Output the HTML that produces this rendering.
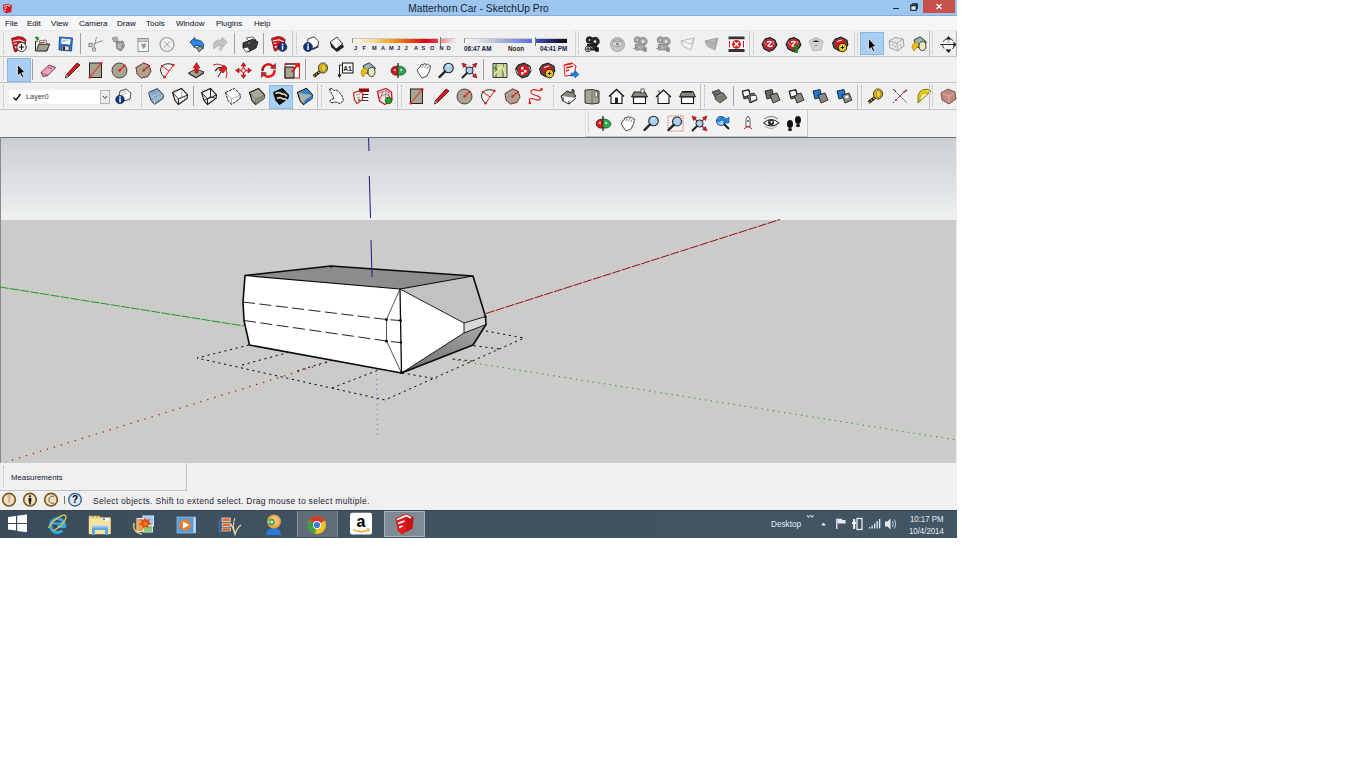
<!DOCTYPE html>
<html><head><meta charset="utf-8">
<style>
html,body{margin:0;padding:0;background:#fff;width:1366px;height:768px;overflow:hidden}
body{font-family:"Liberation Sans",sans-serif;position:relative}
#app{position:absolute;left:0;top:0;width:957px;height:538px;background:#f0f0f0;overflow:hidden}
.a{position:absolute}
#title{left:0;top:0;width:957px;height:15px;background:#9dc6ee;border-bottom:1px solid #86acd4;box-sizing:content-box}
#title .t{left:0;width:957px;top:2px;text-align:center;font-size:10.2px;color:#18222e;line-height:13px}
#close{left:923px;top:0;width:32px;height:13px;background:#c8504a}
#menu{left:0;top:16px;width:957px;height:14px;background:#f5f6f7}
#menu span{position:absolute;top:1.6px;font-size:8px;color:#0a0a14;line-height:11px}
.grip{width:0;border-left:1px dotted #b2b2b2}
.sel{background:#a9cff2;border:1px solid #86b9ea;box-sizing:border-box}
svg.i{position:absolute;overflow:visible}
.stx span{position:absolute;top:0.5px;font-size:5.6px;font-weight:bold;color:#101a48;line-height:7px;white-space:nowrap}
#vp{left:0;top:137px;width:957px;height:326px;background:#cbcbc9;overflow:hidden}
#task{left:0;top:510px;width:957px;height:28px;background:#3d5163}
.tk{position:absolute;color:#e8edf2;font-size:8px;line-height:10px;white-space:nowrap}
</style></head><body>
<div id="app">
  <div id="title" class="a"><div class="a t">Matterhorn Car - SketchUp Pro</div>
    <div id="close" class="a"></div>
    <svg class="i" viewBox="0 0 32 13" style="left:923px;top:0;width:32px;height:13px"><path d="M13.5 4 L18.5 9 M18.5 4 L13.5 9" stroke="#fff" stroke-width="1.25"/></svg>
    <div class="a" style="left:893px;top:7.5px;width:6px;height:1px;background:#1a2a3a"></div>
    <svg class="i" viewBox="0 0 8 8" style="left:910px;top:3px;width:8px;height:8px"><rect x="0.8" y="2" width="5.5" height="5.3" fill="#dde8f2" stroke="#1a2a3a" stroke-width="1.2"/><path d="M2 0.8 H7.3 V6" fill="none" stroke="#1a2a3a" stroke-width="1.2"/><rect x="0.8" y="2" width="5.5" height="1.3" fill="#1a2a3a"/></svg>
    <svg class="i" viewBox="0 0 16 16" style="left:2px;top:2.5px;width:11px;height:11px"><path d="M1.5 3 L8 1 L14.5 3.5 L13.5 13 L6 15 L2 12 Z" fill="#d8141c"/><path d="M3 5 L8 3.2 L12 5" fill="none" stroke="#fff" stroke-width="1.4"/><path d="M3.5 8 L7 6.8" fill="none" stroke="#fff" stroke-width="1.3"/><rect x="3.5" y="10" width="2" height="2" fill="#fff"/></svg>
  </div>
  <div id="menu" class="a">
    <span style="left:5px">File</span><span style="left:27px">Edit</span><span style="left:51px">View</span><span style="left:79px">Camera</span><span style="left:117px">Draw</span><span style="left:146px">Tools</span><span style="left:176px">Window</span><span style="left:216px">Plugins</span><span style="left:254px">Help</span>
  </div>
  <div class="a" style="left:0;top:30px;width:957px;height:1px;background:#e8e8e8"></div>
  <div class="a" style="left:0;top:56px;width:957px;height:1px;background:#c4c4c4"></div>
  <div class="a" style="left:0;top:82px;width:957px;height:1px;background:#c4c4c4"></div>
  <div class="a" style="left:0;top:109px;width:957px;height:1px;background:#c4c4c4"></div>
<div class="a grip" style="left:3px;top:33px;height:21px"></div>
<div class="a sel" style="left:860px;top:32px;width:24px;height:23px"></div>
<svg class="i" viewBox="0 0 16 16" style="left:11px;top:35.5px;width:16px;height:16px"><g transform="translate(0,0) scale(1.0)">
<path d="M0.5 2.5 L7 0.6 L11.5 1.2 L15 3.8 L14 9 L5 15.8 L3.5 15.5 Z" fill="#d8141c" stroke="#3a0808" stroke-width="0.7"/>
<path d="M1.8 5.2 L8.5 4 L13.5 6" fill="none" stroke="#fff" stroke-width="1.1"/>
<path d="M2.5 8 L6 7.3" fill="none" stroke="#fff" stroke-width="0.9"/>
<rect x="4" y="10.5" width="1.8" height="1.8" fill="#fff"/>
</g><circle cx="10.5" cy="11" r="4.6" fill="#fff" stroke="#222" stroke-width="0.9"/><path d="M10.5 8.3v5.4M7.8 11h5.4" stroke="#000" stroke-width="1.2"/></svg>
<svg class="i" viewBox="0 0 16 16" style="left:34px;top:35.5px;width:16px;height:16px"><path d="M1.5 5 L1.5 15 L13 15 L15.5 8 L5 8 L3 13" fill="none" stroke="#222" stroke-width="1"/><path d="M5 5 L12 4 L13 8 L6 8Z" fill="#f4f4f4" stroke="#333" stroke-width="0.6"/><path d="M6 7l5-1" stroke="#d02020" stroke-width="1"/><path d="M2.5 14.5 L5 8.5 L15.5 8.5 L12.5 14.5Z" fill="#a0a08c" stroke="#333" stroke-width="0.6"/><path d="M1 1.5 L4 1 L4.5 4 Z" fill="#1a9a1a" stroke="#0a5a0a" stroke-width="0.6"/><path d="M3.2 3 L3 6" stroke="#0a7a0a" stroke-width="1"/></svg>
<svg class="i" viewBox="0 0 16 16" style="left:58px;top:35.5px;width:16px;height:16px"><path d="M1.5 1 L14.5 2 L13.5 15 L1 14 Z" fill="#2a7ad8" stroke="#0e3c80" stroke-width="0.8"/><path d="M3.5 2.5 L12.5 3.3 L12 8.5 L3.2 7.8Z" fill="#fff"/><path d="M4.5 4.2h6M4.5 5.6h3" stroke="#556" stroke-width="0.5"/><rect x="4" y="10" width="7" height="4.5" fill="#ddd" stroke="#222" stroke-width="0.6"/><rect x="5" y="10.5" width="2" height="3.5" fill="#222"/></svg>
<div class="a" style="left:80px;top:33px;width:1px;height:21px;background:#a0a0a0"></div>
<svg class="i" viewBox="0 0 16 16" style="left:88px;top:35.5px;width:16px;height:16px"><path d="M8.5 1 L6 12 M14.5 4.5 L4 8.5" stroke="#8a8a8a" stroke-width="0.9" fill="none"/><rect x="1" y="7.5" width="3" height="3" fill="none" stroke="#8a8a8a" stroke-width="1.2"/><circle cx="6" cy="13.5" r="1.6" fill="none" stroke="#8a8a8a" stroke-width="1.1"/></svg>
<svg class="i" viewBox="0 0 16 16" style="left:111px;top:35.5px;width:16px;height:16px"><path d="M1 2 L6 1 L7 5 L3 6 Z" fill="#b0b0b0" stroke="#8a8a8a" stroke-width="0.8"/><path d="M5 6 L12 5 L13.5 10 L10 15 L6 13 Z" fill="#9a9a9a" stroke="#7a7a7a" stroke-width="0.8"/><path d="M7 9.5 l3 -1 M7.5 11.5 l2.5-.5" stroke="#e8e8e8" stroke-width="1"/></svg>
<svg class="i" viewBox="0 0 16 16" style="left:136px;top:35.5px;width:16px;height:16px"><rect x="2" y="2.5" width="10.5" height="13" fill="#f4f4f4" stroke="#8a8a8a" stroke-width="0.9"/><rect x="2" y="2.5" width="10.5" height="3" fill="#c8c8c8" stroke="#8a8a8a" stroke-width="0.6"/><path d="M5 8 L10 7.5 L9.5 11 L7 13 Z" fill="#9a9a9a"/></svg>
<svg class="i" viewBox="0 0 16 16" style="left:159px;top:35.5px;width:16px;height:16px"><circle cx="8" cy="8.5" r="7" fill="none" stroke="#9a9a9a" stroke-width="1.2"/><path d="M5 5.5 L11 11.5 M11 5.5 L5 11.5" stroke="#9a9a9a" stroke-width="1"/></svg>
<svg class="i" viewBox="0 0 16 16" style="left:188.5px;top:35.5px;width:16px;height:16px"><path d="M1 6 L6 1.5 L6 4 C10 3.5 14 5 14.5 9 L14 13 C12 10 9 9 6 9.5 L6 12 Z" fill="#2a8ae8" stroke="#0a2a5a" stroke-width="0.8"/><path d="M7 12 L11 10 L14 12 L10 16 L9 14Z" fill="#9aa088" stroke="#222" stroke-width="0.7"/></svg>
<svg class="i" viewBox="0 0 16 16" style="left:212px;top:35.5px;width:16px;height:16px"><path d="M15 6 L10 1.5 L10 4 C6 3.5 2 5 1.5 9 L2 13 C4 10 7 9 10 9.5 L10 12 Z" fill="#c4c4c4" stroke="#a8a8a8" stroke-width="0.8"/><path d="M6 12 L9 10 L11 13 L8 16Z" fill="#c8c8c8"/></svg>
<div class="a" style="left:234px;top:33px;width:1px;height:21px;background:#a0a0a0"></div>
<svg class="i" viewBox="0 0 16 16" style="left:242px;top:35.5px;width:16px;height:16px"><path d="M4 2 L11 1 L14 4 L8 6Z" fill="#fff" stroke="#222" stroke-width="0.7"/><path d="M1 7 L11 3 L16 6 L14 12 L6 16 L1 12Z" fill="#3a3a3a" stroke="#111" stroke-width="0.8"/><path d="M1 12 L6 11 L8 15 L4 16Z" fill="#fff" stroke="#111" stroke-width="0.6"/><circle cx="7" cy="7" r="1" fill="#777"/></svg>
<div class="a" style="left:263px;top:33px;width:1px;height:21px;background:#a0a0a0"></div>
<svg class="i" viewBox="0 0 16 16" style="left:271px;top:35.5px;width:16px;height:16px"><g transform="translate(0,0) scale(0.95)">
<path d="M0.5 2.5 L7 0.6 L11.5 1.2 L15 3.8 L14 9 L5 15.8 L3.5 15.5 Z" fill="#d8141c" stroke="#3a0808" stroke-width="0.7"/>
<path d="M1.8 5.2 L8.5 4 L13.5 6" fill="none" stroke="#fff" stroke-width="1.1"/>
<path d="M2.5 8 L6 7.3" fill="none" stroke="#fff" stroke-width="0.9"/>
<rect x="4" y="10.5" width="1.8" height="1.8" fill="#fff"/>
</g><circle cx="11.5" cy="11" r="4.4" fill="#10357a" stroke="#061c44" stroke-width="0.6"/><rect x="10.8" y="9.7" width="1.5" height="4" fill="#fff"/><circle cx="11.5" cy="8.3" r="0.85" fill="#fff"/></svg>
<div class="a" style="left:292px;top:31px;width:1px;height:25px;background:#c8c8c8"></div>
<div class="a grip" style="left:296px;top:33px;height:21px"></div>
<svg class="i" viewBox="0 0 16 16" style="left:303px;top:35.5px;width:16px;height:16px"><path d="M5 3 L11 0.8 L15.5 5 L15 10 L9 13 L4.5 8Z" fill="#fff" stroke="#111" stroke-width="0.8"/><path d="M9 13 L15 10 L16 11 L10 14Z" fill="#333"/><circle cx="5" cy="11" r="4.5" fill="#10357a" stroke="#061c44" stroke-width="0.6"/><rect x="4.3" y="9.8" width="1.5" height="4" fill="#fff"/><circle cx="5" cy="8.4" r="0.85" fill="#fff"/></svg>
<svg class="i" viewBox="0 0 16 16" style="left:328px;top:35.5px;width:16px;height:16px"><path d="M2 6 L9 1 L14.5 8 L8 13 Z" fill="#fafafa" stroke="#111" stroke-width="0.8"/><path d="M2 6 L8 13 L14.5 8 L16 11 L9 16 L3 11Z" fill="#222"/></svg>
<div class="a" style="left:575px;top:31px;width:1px;height:25px;background:#d0d0d0"></div>
<div class="a grip" style="left:578px;top:33px;height:21px"></div>
<svg class="i" viewBox="0 0 16 16" style="left:585px;top:35.5px;width:16px;height:16px"><circle cx="4.5" cy="4" r="3.3" fill="#2a2a2a" stroke="#111" stroke-width="0.9"/><circle cx="10" cy="5.5" r="4.2" fill="#2a2a2a" stroke="#111" stroke-width="0.9"/><circle cx="10" cy="5.5" r="1.3" fill="#f4f4f4"/><circle cx="4.5" cy="4" r="0.9" fill="#ccc"/><rect x="2.5" y="8.5" width="9" height="5.5" fill="#2a2a2a" stroke="#111" stroke-width="0.9"/><path d="M10 12 L13.5 11 L14 15.5 L10.5 16Z" fill="#111"/><path d="M5 10.5 l3 2" stroke="#ddd" stroke-width="0.6"/><circle cx="3" cy="13" r="2.8" fill="#fff" stroke="#111" stroke-width="0.8"/><path d="M3 11v4M1 13h4" stroke="#000" stroke-width="0.9"/></svg>
<svg class="i" viewBox="0 0 16 16" style="left:609px;top:35.5px;width:16px;height:16px"><circle cx="8.5" cy="8.5" r="7" fill="#c8c8c8" stroke="#9c9c9c" stroke-width="0.9"/><ellipse cx="8.5" cy="8" rx="5" ry="2.6" fill="#d8d8d8" stroke="#8a8a8a" stroke-width="0.7"/><circle cx="8.5" cy="8" r="1.6" fill="#8a8a8a"/><path d="M3 5 Q8.5 2 14 5" fill="none" stroke="#8a8a8a" stroke-width="0.7"/></svg>
<svg class="i" viewBox="0 0 16 16" style="left:633px;top:35.5px;width:16px;height:16px"><circle cx="4.5" cy="4" r="3.3" fill="#a4a4a4" stroke="#8c8c8c" stroke-width="0.9"/><circle cx="10" cy="5.5" r="4.2" fill="#a4a4a4" stroke="#8c8c8c" stroke-width="0.9"/><circle cx="10" cy="5.5" r="1.3" fill="#f4f4f4"/><circle cx="4.5" cy="4" r="0.9" fill="#ccc"/><rect x="2.5" y="8.5" width="9" height="5.5" fill="#a4a4a4" stroke="#8c8c8c" stroke-width="0.9"/><path d="M10 12 L13.5 11 L14 15.5 L10.5 16Z" fill="#8c8c8c"/><path d="M5 10.5 l3 2" stroke="#ddd" stroke-width="0.6"/><path d="M0 12.5 L5 11.5" stroke="#8c8c8c" stroke-width="1"/></svg>
<svg class="i" viewBox="0 0 16 16" style="left:656px;top:35.5px;width:16px;height:16px"><circle cx="4.5" cy="4" r="3.3" fill="#a4a4a4" stroke="#8c8c8c" stroke-width="0.9"/><circle cx="10" cy="5.5" r="4.2" fill="#a4a4a4" stroke="#8c8c8c" stroke-width="0.9"/><circle cx="10" cy="5.5" r="1.3" fill="#f4f4f4"/><circle cx="4.5" cy="4" r="0.9" fill="#ccc"/><rect x="2.5" y="8.5" width="9" height="5.5" fill="#a4a4a4" stroke="#8c8c8c" stroke-width="0.9"/><path d="M10 12 L13.5 11 L14 15.5 L10.5 16Z" fill="#8c8c8c"/><path d="M5 10.5 l3 2" stroke="#ddd" stroke-width="0.6"/><path d="M0 12.5 L5 11.5" stroke="#8c8c8c" stroke-width="1"/></svg>
<svg class="i" viewBox="0 0 16 16" style="left:680px;top:35.5px;width:16px;height:16px"><path d="M1 5 L10 3 L14 2 L11 14 L3 10 Z" fill="#f4f4f4" stroke="#aaa" stroke-width="0.8"/><path d="M1 5 L11 8 L14 2" fill="none" stroke="#aaa" stroke-width="0.7"/></svg>
<svg class="i" viewBox="0 0 16 16" style="left:704px;top:35.5px;width:16px;height:16px"><path d="M1 5 L14 2 L11 14 L3 10 Z" fill="#b4b4b4" stroke="#999" stroke-width="0.8"/><path d="M1 5 L11 8 L14 2" fill="none" stroke="#9a9a9a" stroke-width="0.7"/></svg>
<svg class="i" viewBox="0 0 16 16" style="left:728px;top:35.5px;width:16px;height:16px"><rect x="0.5" y="0.5" width="16" height="3" fill="#333"/><rect x="0.5" y="13" width="16" height="3" fill="#333"/><rect x="0.5" y="3.5" width="16" height="9.5" fill="#fff"/><circle cx="8.5" cy="8.3" r="4.4" fill="#e01818"/><path d="M6.3 6 L10.7 10.6 M10.7 6 L6.3 10.6" stroke="#fff" stroke-width="1.4"/><path d="M1.5 5v6.5M15.5 5v6.5" stroke="#e01818" stroke-width="1"/></svg>
<div class="a" style="left:749px;top:31px;width:1px;height:25px;background:#c8c8c8"></div>
<div class="a grip" style="left:753px;top:33px;height:21px"></div>
<svg class="i" viewBox="0 0 16 16" style="left:761px;top:35.5px;width:16px;height:16px"><path d="M1 8 L4 3 L9 1.5 L14 4 L16 9 L13 13.5 L8 15.5 L3 13 Z" fill="#5a4a4a" stroke="#111" stroke-width="1"/><circle cx="8.5" cy="8.3" r="5.2" fill="#d81820"/><path d="M6 6.5 Q8 4.5 10.5 6 L7 9.5 Q9.5 11.5 11.5 9.5" fill="none" stroke="#fff" stroke-width="1.3"/><path d="M3 5.5 L5 9 M13 5 L12 9" stroke="#ddd" stroke-width="0.6"/></svg>
<svg class="i" viewBox="0 0 16 16" style="left:785px;top:35.5px;width:16px;height:16px"><path d="M1 8 L4 3 L9 1.5 L14 4 L16 9 L13 13.5 L8 15.5 L3 13 Z" fill="#5a4a4a" stroke="#111" stroke-width="1"/><circle cx="8.5" cy="8.3" r="5.2" fill="#d81820"/><path d="M6 6.5 Q8 4.5 10.5 6 L7 9.5 Q9.5 11.5 11.5 9.5" fill="none" stroke="#fff" stroke-width="1.3"/><path d="M3 5.5 L5 9 M13 5 L12 9" stroke="#ddd" stroke-width="0.6"/><path d="M9.5 16.5 L9.5 12 L8 12 L11 8.5 L14 12 L12.5 12 L12.5 16.5Z" fill="#1a8a1a" stroke="#0a4a0a" stroke-width="0.5"/></svg>
<svg class="i" viewBox="0 0 16 16" style="left:808px;top:35.5px;width:16px;height:16px"><path d="M1 5 L8 1.5 L15 5 L13 14 L5 15 Z" fill="#d4d4d4" stroke="#aaa" stroke-width="0.8"/><path d="M4 6 L8 4 L12 6 M6 10l4-1" stroke="#9a9a9a" stroke-width="1"/></svg>
<svg class="i" viewBox="0 0 16 16" style="left:832px;top:35.5px;width:16px;height:16px"><path d="M0.5 7 L3 3 L9 1 L15 4 L16 9 L13 13 L7 15 L2 12 Z" fill="#4a4a44" stroke="#111" stroke-width="0.9"/><path d="M3 5 L10 2.5 L14 6 L12.5 11 L6 13 L3.5 10Z" fill="#d81820"/><path d="M5 5.5 L10 4" stroke="#fff" stroke-width="1"/><circle cx="10.5" cy="11.5" r="4.2" fill="#f0d010" stroke="#111" stroke-width="0.9"/><path d="M8.8 11.5 h3.4 M10.5 9.8v3.4" stroke="#111" stroke-width="1"/></svg>
<div class="a" style="left:854px;top:31px;width:1px;height:25px;background:#d0d0d0"></div>
<div class="a grip" style="left:857px;top:33px;height:21px"></div>
<svg class="i" viewBox="0 0 16 16" style="left:863px;top:35.5px;width:16px;height:16px"><path d="M5.5 2.5 L5.5 14 L8 11.5 L10 15.5 L11.8 14.7 L9.8 10.8 L13 10.5 Z" fill="#000" stroke="#fff" stroke-width="0.7"/></svg>
<svg class="i" viewBox="0 0 16 16" style="left:888px;top:35.5px;width:16px;height:16px"><path d="M1 5 L7 1.5 L15 3 L16 10 L10 15 L2 12 Z" fill="#e8e8e8" stroke="#9a9a9a" stroke-width="0.9"/><path d="M1 5 L9 7 L15 3 M9 7 L10 15 M4 8 l4 3 M12 8l2 4" stroke="#9a9a9a" stroke-width="0.8" fill="none"/></svg>
<svg class="i" viewBox="0 0 16 16" style="left:911px;top:35.5px;width:16px;height:16px"><path d="M3 4 L9 0.8 L15.5 6 L11 12 L6 11Z" fill="#9ab8b8" stroke="#222" stroke-width="0.9"/><path d="M1 11 Q2 6 6 6 L8 9 Q5 12 3 15 Z" fill="#f0c010" stroke="#8a6a00" stroke-width="0.6"/><ellipse cx="11.5" cy="10" rx="3.5" ry="4.5" fill="#e8e8c0" stroke="#222" stroke-width="0.8"/></svg>
<div class="a" style="left:929px;top:31px;width:1px;height:25px;background:#b8b8b8"></div>
<div class="a grip" style="left:932px;top:33px;height:21px"></div>
<svg class="i" viewBox="0 0 16 16" style="left:940px;top:35.5px;width:16px;height:16px"><circle cx="8.5" cy="8.5" r="6" fill="none" stroke="#111" stroke-width="0.8" stroke-dasharray="5 2"/><path d="M0 8.5 H17" stroke="#111" stroke-width="0.9"/><path d="M8.5 0 L11 3.5 L6 3.5Z M8.5 17 L11 13.5 L6 13.5Z M17 8.5 L13.5 6 L13.5 11Z" fill="#111"/><text x="8.5" y="7" font-size="3.5" text-anchor="middle" fill="#333" font-family="Liberation Sans">C</text></svg>
<div class="a" style="left:956px;top:31px;width:1px;height:25px;background:#b8b8b8"></div>
<div class="a" style="left:352px;top:38px;width:86px;height:5px;background:linear-gradient(90deg,#fdf8ec,#f6d890 25%,#f0a020 45%,#e84010 70%,#e00010 85%,#e83a48);border-left:1px solid #888;border-top:1px solid #c8c8c8;box-sizing:border-box"></div>
<div class="a" style="left:440px;top:37px;width:1px;height:9px;background:#777"></div>
<div class="a" style="left:441px;top:38px;width:14px;height:5px;background:linear-gradient(90deg,#f08890,#fce8ea);border-top:1px solid #c8c8c8;box-sizing:border-box"></div>
<div class="a" style="left:464px;top:38px;width:68px;height:5px;background:linear-gradient(90deg,#fafbfc,#b8c4d8 45%,#5870e0);border-left:1px solid #888;border-top:1px solid #c8c8c8;box-sizing:border-box"></div>
<div class="a" style="left:535px;top:37px;width:1px;height:9px;background:#777"></div>
<div class="a" style="left:536px;top:38px;width:31px;height:5px;background:linear-gradient(90deg,#4050c0,#181840 70%,#080810);border-top:1px solid #c8c8c8;box-sizing:border-box"></div>
<div class="a stx" style="left:354px;top:44px;word-spacing:0;letter-spacing:0">
<span style="left:0px">J</span><span style="left:8.5px">F</span><span style="left:18px">M</span><span style="left:27px">A</span><span style="left:35px">M</span><span style="left:43px">J</span><span style="left:50.5px">J</span><span style="left:60px">A</span><span style="left:67.5px">S</span><span style="left:76px">O</span><span style="left:85.5px">N</span><span style="left:92.5px">D</span>
</div>
<div class="a stx" style="left:464px;top:44px"><span style="left:0;font-size:6.3px">06:47 AM</span><span style="left:44px;color:#2a1a08;font-size:6.3px">Noon</span><span style="left:76px;font-size:6.3px">04:41 PM</span></div>

<div class="a grip" style="left:3px;top:59px;height:21px"></div>
<div class="a sel" style="left:7px;top:58px;width:24px;height:24px"></div>
<svg class="i" viewBox="0 0 16 16" style="left:12px;top:61.5px;width:16px;height:16px"><path d="M5.5 2.5 L5.5 14 L8 11.5 L10 15.5 L11.8 14.7 L9.8 10.8 L13 10.5 Z" fill="#000" stroke="#fff" stroke-width="0.7"/></svg>
<div class="a" style="left:32px;top:59px;width:1px;height:21px;background:#a0a0a0"></div>
<svg class="i" viewBox="0 0 16 16" style="left:40px;top:61.5px;width:16px;height:16px"><path d="M1 10.5 L9 3 L15.5 5.5 L8 13.5 Z" fill="#f4a0c0" stroke="#4a2a3a" stroke-width="0.8"/><path d="M1 10.5 L3 14.5 L8 13.5" fill="#e890b0" stroke="#4a2a3a" stroke-width="0.8"/><path d="M8 5.5 L12 6.5" stroke="#7a3a5a" stroke-width="0.8"/></svg>
<svg class="i" viewBox="0 0 16 16" style="left:64px;top:61.5px;width:16px;height:16px"><path d="M13 1 L16 3 L5 14 L1.5 16 L2.5 12.5Z" fill="#d81820" stroke="#3a0a0a" stroke-width="0.8"/><path d="M2.5 12.5 L5 14 L1.5 16Z" fill="#e8d0a0" stroke="#222" stroke-width="0.5"/></svg>
<svg class="i" viewBox="0 0 16 16" style="left:88px;top:61.5px;width:16px;height:16px"><rect x="1.5" y="1" width="12" height="14.5" fill="#a8a490" stroke="#222" stroke-width="1"/><path d="M1.5 15.5 L13.5 1" stroke="#e81818" stroke-width="1"/><circle cx="1.8" cy="15.2" r="1.2" fill="#e81818"/><circle cx="13.2" cy="1.3" r="1.2" fill="#e81818"/></svg>
<svg class="i" viewBox="0 0 16 16" style="left:111px;top:61.5px;width:16px;height:16px"><circle cx="8.5" cy="8.5" r="7.5" fill="#a8a490" stroke="#333" stroke-width="0.9"/><path d="M8.5 8.5 L13.5 3.5" stroke="#e81818" stroke-width="1.1"/><circle cx="8.5" cy="8.5" r="1.2" fill="#e81818"/><circle cx="13.5" cy="3.5" r="1.1" fill="#e81818"/></svg>
<svg class="i" viewBox="0 0 16 16" style="left:135px;top:61.5px;width:16px;height:16px"><path d="M8.5 1 L14 3 L16 9 L13 14.5 L6.5 16 L2 12 L1 5.5Z" fill="#a8a490" stroke="#e81818" stroke-width="1" stroke-dasharray="2 1"/><path d="M8.5 1 L14 3 L16 9 L13 14.5 L6.5 16 L2 12 L1 5.5Z" fill="none" stroke="#222" stroke-width="0.5"/><path d="M8.5 8.5 L14 4" stroke="#e81818" stroke-width="1.1"/><circle cx="8.5" cy="8.5" r="1.2" fill="#e81818"/></svg>
<svg class="i" viewBox="0 0 16 16" style="left:159px;top:61.5px;width:16px;height:16px"><path d="M5.5 15.5 Q-1 9 3 4 Q8 0 14.5 3" fill="none" stroke="#222" stroke-width="1"/><path d="M3 4 L10 9 M5.5 15.5 L14.5 3" stroke="#e81818" stroke-width="1"/><circle cx="3" cy="4" r="1.1" fill="#e81818"/><circle cx="5.5" cy="15.3" r="1.2" fill="#e81818"/><circle cx="14.5" cy="3" r="1.2" fill="#e81818"/></svg>
<svg class="i" viewBox="0 0 16 16" style="left:188px;top:61.5px;width:16px;height:16px"><path d="M0.5 11 L8 7 L16 10 L8 15.5Z" fill="#a8a490" stroke="#222" stroke-width="0.9"/><path d="M0.5 11 L8 15.5 L16 10 L16 11.5 L8 16.5 L0.5 12Z" fill="#333"/><path d="M8.5 0.5 L12 6 L10 6 L10 11 L7 11 L7 6 L5 6Z" fill="#e81818" stroke="#6a0a0a" stroke-width="0.5"/></svg>
<svg class="i" viewBox="0 0 16 16" style="left:212px;top:61.5px;width:16px;height:16px"><path d="M1 3 Q9 0 14 7 Q16 12 14 16" fill="none" stroke="#e81818" stroke-width="1"/><path d="M3 9 Q7 4 11 6" fill="none" stroke="#111" stroke-width="1.2"/><path d="M7 8 L12 3 L15 6 L11 11Z" fill="#e81818" stroke="#5a0a0a" stroke-width="0.6"/><path d="M9 10 Q7 13 6 15" fill="none" stroke="#111" stroke-width="1"/></svg>
<svg class="i" viewBox="0 0 16 16" style="left:235px;top:61.5px;width:16px;height:16px"><path d="M8.5 0.5 L11 4 L6 4Z M8.5 16.5 L11 13 L6 13Z M0.5 8.5 L4 6 L4 11Z M16.5 8.5 L13 6 L13 11Z" fill="#e81818" stroke="#6a0a0a" stroke-width="0.5"/><path d="M8.5 4v9M4 8.5h9" stroke="#e81818" stroke-width="1.5"/><circle cx="8.5" cy="8.5" r="2" fill="#fff" stroke="#e81818" stroke-width="1"/></svg>
<svg class="i" viewBox="0 0 16 16" style="left:260px;top:61.5px;width:16px;height:16px"><path d="M2.5 9 A6 6 0 0 1 13 4.5" fill="none" stroke="#e81818" stroke-width="2.4"/><path d="M14.5 8 A6 6 0 0 1 4 12.5" fill="none" stroke="#e81818" stroke-width="2.4"/><path d="M15.5 1.5 L15.5 7 L10.5 6Z M1.5 15.5 L1.5 10 L6.5 11Z" fill="#e81818" stroke="#222" stroke-width="0.5"/><path d="M2.5 9 A6 6 0 0 1 5 4" fill="none" stroke="#111" stroke-width="0.7"/></svg>
<svg class="i" viewBox="0 0 16 16" style="left:284px;top:61.5px;width:16px;height:16px"><rect x="1" y="2" width="14.5" height="14" fill="#fff" stroke="#e81818" stroke-width="1"/><path d="M1 16 L1 5 L10 5 L10 16Z" fill="#a8a490" stroke="#111" stroke-width="1"/><path d="M1 2h12v3" fill="none" stroke="#111" stroke-width="1"/><path d="M8 10 L14 2" stroke="#e81818" stroke-width="2"/><path d="M15.5 0.5 L15.5 6 L10 2.5Z" fill="#e81818"/></svg>
<div class="a" style="left:305px;top:59px;width:1px;height:21px;background:#a0a0a0"></div>
<svg class="i" viewBox="0 0 16 16" style="left:312px;top:61.5px;width:16px;height:16px"><path d="M1.5 14.5 L8 9.5" stroke="#111" stroke-width="3"/><path d="M1.5 14.5 L8 9.5" stroke="#f0c010" stroke-width="1.5" stroke-dasharray="1.5 1.5"/><ellipse cx="11" cy="6" rx="4.5" ry="5" fill="#f0c010" stroke="#222" stroke-width="0.9"/><ellipse cx="11.5" cy="6" rx="2.5" ry="3.5" fill="#e8d040" stroke="#7a6a10" stroke-width="0.6"/><path d="M8 1.5 Q14 0 15.5 4" fill="none" stroke="#888" stroke-width="1"/></svg>
<svg class="i" viewBox="0 0 16 16" style="left:337px;top:61.5px;width:16px;height:16px"><rect x="5.5" y="1" width="10.5" height="10" fill="#fff" stroke="#222" stroke-width="1.1"/><text x="10.8" y="8.8" font-size="7" font-weight="bold" text-anchor="middle" fill="#222" font-family="Liberation Mono">A1</text><path d="M2.5 3 V15" stroke="#111" stroke-width="0.9"/><path d="M0.5 12.5 L2.5 16 L4.5 12.5Z" fill="#111"/><path d="M2.5 3 H5.5" stroke="#111" stroke-width="0.7"/></svg>
<svg class="i" viewBox="0 0 16 16" style="left:360px;top:61.5px;width:16px;height:16px"><path d="M3 4 L9 0.8 L15.5 6 L11 12 L6 11Z" fill="#9ab8b8" stroke="#222" stroke-width="0.9"/><path d="M1 11 Q2 6 6 6 L8 9 Q5 12 3 15 Z" fill="#f0c010" stroke="#8a6a00" stroke-width="0.6"/><ellipse cx="11.5" cy="10" rx="3.5" ry="4.5" fill="#e8e8c0" stroke="#222" stroke-width="0.8"/></svg>
<svg class="i" viewBox="0 0 16 16" style="left:390px;top:61.5px;width:16px;height:16px"><path d="M8 1 L8 16" stroke="#111" stroke-width="1.2"/><path d="M8 4 Q1 4 1 9 Q2 14 8 13Z" fill="#d01818" stroke="#3a0a0a" stroke-width="0.6"/><path d="M8 4 Q15 4 16 9 Q15 14 8 13Z" fill="#28a850" stroke="#0a3a1a" stroke-width="0.6"/><path d="M3.5 8 l2-1.5v3Z M12.5 8 l-2-1.5v3Z" fill="#fff"/></svg>
<svg class="i" viewBox="0 0 16 16" style="left:415px;top:61.5px;width:16px;height:16px"><path d="M2 8 L5 5 L6 2.5 L8 3 L9 1.5 L11 2.5 L12.5 2 L14 3.5 L15.5 4 L14.5 9 L12 14 L7 16 L4 12 Z" fill="#fff" stroke="#222" stroke-width="0.8"/><path d="M7 6 L8.5 3.5 M9.5 6 L11 3 M11.5 7 L13.5 4" stroke="#333" stroke-width="0.6"/></svg>
<svg class="i" viewBox="0 0 16 16" style="left:438px;top:61.5px;width:16px;height:16px"><circle cx="10.5" cy="6" r="4.8" fill="#a8d0f0" stroke="#222" stroke-width="1.1"/><path d="M7 9.5 L1.5 15" stroke="#222" stroke-width="2.4" stroke-linecap="round"/><path d="M9 4 Q10 3 12 3.5" stroke="#fff" stroke-width="0.9" fill="none"/></svg>
<svg class="i" viewBox="0 0 16 16" style="left:461px;top:61.5px;width:16px;height:16px"><path d="M1 1 L5.5 2.5 L2.5 5.5Z M16 1 L11.5 2.5 L14.5 5.5Z M16 16 L11.5 14.5 L14.5 11.5Z" fill="#d01818" stroke="#5a0a0a" stroke-width="0.5"/><path d="M2 2 L6 6 M15 2 L11 6 M15 15 L11 11" stroke="#d01818" stroke-width="1.2"/><circle cx="8.5" cy="8.5" r="3.6" fill="#a8d0f0" stroke="#222" stroke-width="1"/><path d="M6 11 L1.5 15.5" stroke="#222" stroke-width="2" stroke-linecap="round"/></svg>
<div class="a" style="left:483px;top:59px;width:1px;height:21px;background:#a0a0a0"></div>
<svg class="i" viewBox="0 0 16 16" style="left:492px;top:61.5px;width:16px;height:16px"><path d="M1 1.5 L15 1.5 L15 15.5 L1 15.5Z" fill="#c8d8a8" stroke="#222" stroke-width="0.9"/><path d="M4 1.5 L4 15.5 M11 1.5 L11 15.5" stroke="#556a3a" stroke-width="1.2"/><path d="M2 13 L10 4 L14 14" fill="none" stroke="#f0e890" stroke-width="1.5"/><path d="M2 5 l3 3" stroke="#3a8a2a" stroke-width="1.5"/></svg>
<svg class="i" viewBox="0 0 16 16" style="left:515px;top:61.5px;width:16px;height:16px"><path d="M0.5 7 L3 3 L9 1 L15 4 L16 9 L13 14 L7 16 L2 12 Z" fill="#4a4a44" stroke="#111" stroke-width="0.9"/><path d="M3 5 L10 2.5 L14 6 L12.5 12.5 L6 14.5 L3.5 11Z" fill="#d81820"/><path d="M6 5 h2.5 v2.5 h-2.5Z M9 8 h2.5 v2.5 h-2.5Z M6 10 h2.5 v2.5 h-2.5Z" fill="#fff"/><path d="M1 8 L3 12 M14 4.5 L15.5 9" stroke="#d8d8c8" stroke-width="0.8"/></svg>
<svg class="i" viewBox="0 0 16 16" style="left:539px;top:61.5px;width:16px;height:16px"><path d="M0.5 7 L3 3 L9 1 L15 4 L16 9 L13 13 L7 15 L2 12 Z" fill="#4a4a44" stroke="#111" stroke-width="0.9"/><path d="M3 5 L10 2.5 L14 6 L12.5 11 L6 13 L3.5 10Z" fill="#d81820"/><path d="M5 5.5 L10 4" stroke="#fff" stroke-width="1"/><circle cx="10.5" cy="11.5" r="4.2" fill="#f0d010" stroke="#111" stroke-width="0.9"/><path d="M8.8 11.5 h3.4 M10.5 9.8v3.4" stroke="#111" stroke-width="1"/></svg>
<svg class="i" viewBox="0 0 16 16" style="left:563px;top:61.5px;width:16px;height:16px"><path d="M1 3 L9 1 L13 4 L11 13 L2 14Z" fill="#fff" stroke="#e81818" stroke-width="1"/><path d="M2 3 L9 1.5 M3 6 l7-2 M3 9 l3-1" stroke="#e81818" stroke-width="1.4"/><path d="M8 11 L12 11 L12 8.5 L16 12.5 L12 16 L12 14 L8 14Z" fill="#1a8ae8" stroke="#0a3a7a" stroke-width="0.5"/></svg>
<div class="a grip" style="left:3px;top:85px;height:22px"></div>
<div class="a" style="left:9px;top:90px;width:101px;height:14px;background:#fff"></div>
<div class="a" style="left:100px;top:90px;width:10px;height:14px;background:#ececec;border:1px solid #b4b4b4;box-sizing:border-box"></div>
<svg class="i" viewBox="0 0 10 14" style="left:100px;top:90px;width:10px;height:14px"><path d="M3 6 L5 8.5 L7 6" fill="none" stroke="#444" stroke-width="1"/></svg>
<svg class="i" viewBox="0 0 8 8" style="left:13px;top:93px;width:8px;height:8px"><path d="M0.5 4.5 L3 7 L7.5 1" fill="none" stroke="#000" stroke-width="1.3"/></svg>
<div class="a" style="left:26px;top:91px;font-size:7.4px;line-height:12px;color:#3a3a3a">Layer0</div>
<svg class="i" viewBox="0 0 16 16" style="left:115px;top:88px;width:16px;height:16px"><path d="M5 3 L11 1 L16 5 L15 11 L9 13 L4 9Z" fill="#fff" stroke="#222" stroke-width="0.8"/><path d="M6 5l5-2 M7 7l5-2" stroke="#888" stroke-width="0.6"/><circle cx="5" cy="11.5" r="4.3" fill="#10357a" stroke="#061c44" stroke-width="0.6"/><rect x="4.3" y="10.3" width="1.5" height="4" fill="#fff"/><circle cx="5" cy="8.9" r="0.85" fill="#fff"/></svg>
<div class="a grip" style="left:141px;top:85px;height:22px"></div>
<svg class="i" viewBox="0 0 16 16" style="left:148px;top:88px;width:16px;height:16px"><path d="M0.5 4.5 L9.5 0.5 L15.5 7 L15 10.5 L6.5 16.5 L3 12.5 Z" fill="#88a8c4" stroke="#1a2a3a" stroke-width="0.9"/><path d="M0.5 4.5 L6.5 11 L15.5 7 M6.5 11 L6.5 16.5 M3 9 L12 5 M5 13 L14 9" stroke="#c0d4e8" stroke-width="0.7" fill="none"/></svg>
<svg class="i" viewBox="0 0 16 16" style="left:172px;top:88px;width:16px;height:16px"><path d="M0.5 4.5 L9.5 0.5 L15.5 7 L15 10.5 L6.5 16.5 L3 12.5 Z" fill="#fff" stroke="#111" stroke-width="1.1"/><path d="M0.5 4.5 L6.5 11 L15.5 7 M6.5 11 L6.5 16.5" fill="none" stroke="#111" stroke-width="0.9"/><path d="M3 12.5 L9.5 9 L15 10.5 M9.5 0.5 L9.5 9" fill="none" stroke="#333" stroke-width="0.6" stroke-dasharray="1 1"/></svg>
<div class="a" style="left:193px;top:86px;width:1px;height:20px;background:#a0a0a0"></div>
<div class="a sel" style="left:269px;top:85px;width:24px;height:24px"></div>
<svg class="i" viewBox="0 0 16 16" style="left:201px;top:88px;width:16px;height:16px"><path d="M0.5 4.5 L9.5 0.5 L15.5 7 L15 10.5 L6.5 16.5 L3 12.5 Z" fill="none" stroke="#111" stroke-width="1.1"/><path d="M0.5 4.5 L6.5 11 L15.5 7 M6.5 11 L6.5 16.5 M3 12.5 L9.5 9 L15 10.5 M9.5 0.5 L9.5 9" fill="none" stroke="#111" stroke-width="0.9"/></svg>
<svg class="i" viewBox="0 0 16 16" style="left:225px;top:88px;width:16px;height:16px"><path d="M0.5 4.5 L9.5 0.5 L15.5 7 L15 10.5 L6.5 16.5 L3 12.5 Z" fill="#fff" stroke="#111" stroke-width="1" stroke-dasharray="3 1"/><path d="M0.5 4.5 L6.5 11 L15.5 7 M6.5 11 L6.5 16.5" fill="none" stroke="#555" stroke-width="0.5"/></svg>
<svg class="i" viewBox="0 0 16 16" style="left:249px;top:88px;width:16px;height:16px"><path d="M0.5 4.5 L9.5 0.5 L15.5 7 L15 10.5 L6.5 16.5 L3 12.5 Z" fill="#aaa898" stroke="#111" stroke-width="1.1"/><path d="M6.5 11 L15.5 7 L15 10.5 L6.5 16.5Z" fill="#8e8c7e"/><path d="M0.5 4.5 L6.5 11 L15.5 7 M6.5 11 L6.5 16.5" fill="none" stroke="#555" stroke-width="0.5"/></svg>
<svg class="i" viewBox="0 0 16 16" style="left:273px;top:88px;width:16px;height:16px"><path d="M0.5 4.5 L9.5 0.5 L15.5 7 L15 10.5 L6.5 16.5 L3 12.5 Z" fill="#111" stroke="#000" stroke-width="1"/><path d="M2.5 5.5 Q6 3.5 9 6 Q12 5.5 14 8.5 M4 10.5 Q7.5 8.5 10 11 Q12.5 10.5 14 12.5" stroke="#e0d8b8" stroke-width="1.7" fill="none"/></svg>
<svg class="i" viewBox="0 0 16 16" style="left:297px;top:88px;width:16px;height:16px"><path d="M0.5 4.5 L9.5 0.5 L15.5 7 L15 10.5 L6.5 16.5 L3 12.5 Z" fill="#b0b0a4" stroke="#111" stroke-width="1.1"/><path d="M2 5 L9.5 1.5 L14.5 7 Z" fill="#1a8ae8"/><path d="M15.5 7 L15 10.5 L6.5 16.5 L8 12Z" fill="#2a7ac8"/></svg>
<div class="a" style="left:317px;top:84px;width:1px;height:25px;background:#c0c0c0"></div>
<div class="a grip" style="left:321px;top:85px;height:22px"></div>
<svg class="i" viewBox="0 0 16 16" style="left:329px;top:88px;width:16px;height:16px"><path d="M0.5 1 L3 0.5 L5 2.8 L7 2 L9 3 L10.5 4.5 L13 8 L14.5 12.5 L11 15.5 L7 14 L3 14.8 L0.8 13.5 L2 11.5 L5 10.5 L3.5 7 Z" fill="#fff" stroke="#111" stroke-width="0.9" stroke-dasharray="3 0.6"/></svg>
<svg class="i" viewBox="0 0 16 16" style="left:353px;top:88px;width:16px;height:16px"><rect x="6" y="0.5" width="10" height="3.5" fill="#8a0a10"/><rect x="6" y="4" width="10" height="11.5" fill="#fff"/><path d="M9 6.5h6.5 M9 9.5h6.5 M9 12.5h6.5" stroke="#111" stroke-width="0.9"/><path d="M0.5 5 L6 3 L10 5.5 L9 12 L4 15.5 L1.5 12Z" fill="#f4f0f0" stroke="#c81818" stroke-width="1.2"/><path d="M3 7 L7 6 M4 10 l3 -1" stroke="#666" stroke-width="0.7"/><circle cx="6" cy="12" r="1.2" fill="#5a8a3a"/></svg>
<svg class="i" viewBox="0 0 16 16" style="left:377px;top:88px;width:16px;height:16px"><path d="M0.5 3.5 L9 0.5 L14.5 4 L15 12 L8 16.5 L2.5 13Z" fill="#f0e8e8" stroke="#c81818" stroke-width="1.3"/><path d="M2 5 L9 2.5 L13 5 M4 8 L9 6 L12 8 M9 2.5 L8.5 10" stroke="#555" stroke-width="0.6" fill="none"/><path d="M3 11 L6 3.5 M11 4 L13 11" stroke="#d03030" stroke-width="0.8"/><circle cx="11.5" cy="12.5" r="3.3" fill="#2a9a2a" stroke="#0a4a0a" stroke-width="0.7"/></svg>
<div class="a" style="left:397px;top:84px;width:1px;height:25px;background:#c0c0c0"></div>
<div class="a grip" style="left:401px;top:85px;height:22px"></div>
<svg class="i" viewBox="0 0 16 16" style="left:409px;top:88px;width:16px;height:16px"><rect x="1.5" y="1" width="12" height="14.5" fill="#a8a490" stroke="#222" stroke-width="1"/><path d="M1.5 15.5 L13.5 1" stroke="#e81818" stroke-width="1"/><circle cx="1.8" cy="15.2" r="1.2" fill="#e81818"/><circle cx="13.2" cy="1.3" r="1.2" fill="#e81818"/></svg>
<svg class="i" viewBox="0 0 16 16" style="left:433px;top:88px;width:16px;height:16px"><path d="M13 1 L16 3 L5 14 L1.5 16 L2.5 12.5Z" fill="#d81820" stroke="#3a0a0a" stroke-width="0.8"/><path d="M2.5 12.5 L5 14 L1.5 16Z" fill="#e8d0a0" stroke="#222" stroke-width="0.5"/></svg>
<svg class="i" viewBox="0 0 16 16" style="left:456px;top:88px;width:16px;height:16px"><circle cx="8.5" cy="8.5" r="7.5" fill="#a8a490" stroke="#333" stroke-width="0.9"/><path d="M8.5 8.5 L13.5 3.5" stroke="#e81818" stroke-width="1.1"/><circle cx="8.5" cy="8.5" r="1.2" fill="#e81818"/><circle cx="13.5" cy="3.5" r="1.1" fill="#e81818"/></svg>
<svg class="i" viewBox="0 0 16 16" style="left:480px;top:88px;width:16px;height:16px"><path d="M5.5 15.5 Q-1 9 3 4 Q8 0 14.5 3" fill="none" stroke="#222" stroke-width="1"/><path d="M3 4 L10 9 M5.5 15.5 L14.5 3" stroke="#e81818" stroke-width="1"/><circle cx="3" cy="4" r="1.1" fill="#e81818"/><circle cx="5.5" cy="15.3" r="1.2" fill="#e81818"/><circle cx="14.5" cy="3" r="1.2" fill="#e81818"/></svg>
<svg class="i" viewBox="0 0 16 16" style="left:504px;top:88px;width:16px;height:16px"><path d="M8.5 1 L14 3 L16 9 L13 14.5 L6.5 16 L2 12 L1 5.5Z" fill="#a8a490" stroke="#e81818" stroke-width="1" stroke-dasharray="2 1"/><path d="M8.5 1 L14 3 L16 9 L13 14.5 L6.5 16 L2 12 L1 5.5Z" fill="none" stroke="#222" stroke-width="0.5"/><path d="M8.5 8.5 L14 4" stroke="#e81818" stroke-width="1.1"/><circle cx="8.5" cy="8.5" r="1.2" fill="#e81818"/></svg>
<svg class="i" viewBox="0 0 16 16" style="left:528px;top:88px;width:16px;height:16px"><path d="M1.8 15 Q0.5 10 4.5 10.5 Q10 13 12 11.5 Q13.5 9 8 7.5 Q2 6 3 3 Q5 0.5 10 2.5 Q12.5 3.5 13.5 1" fill="none" stroke="#d81818" stroke-width="1.15"/><circle cx="1.8" cy="15" r="1.3" fill="#d81818"/><circle cx="13.5" cy="1.2" r="1.2" fill="#d81818"/></svg>
<div class="a grip" style="left:553px;top:85px;height:22px"></div>
<svg class="i" viewBox="0 0 16 16" style="left:560px;top:88px;width:16px;height:16px"><path d="M1 8 L7 3 L12 5 L12 1.5 L14 2 L14 6 L16 8 L9 13 Z" fill="#8a8878" stroke="#111" stroke-width="0.9"/><path d="M1 8 L3 13 L9 16 L16 10 M9 13 L9 16 M3 13 L3 9" fill="#fff" stroke="#111" stroke-width="0.9"/></svg>
<svg class="i" viewBox="0 0 16 16" style="left:584px;top:88px;width:16px;height:16px"><path d="M1 2 L8 1.5 L15 3 L15 15 L8 16 L1 15Z" fill="#a8a490" stroke="#222" stroke-width="0.9"/><path d="M8 1.5 V16" stroke="#555" stroke-width="0.7"/><rect x="11" y="4" width="2.5" height="5" fill="#fff" stroke="#222" stroke-width="0.6"/></svg>
<svg class="i" viewBox="0 0 16 16" style="left:608px;top:88px;width:16px;height:16px"><path d="M1 8.5 L8.5 1.5 L16 8.5" fill="none" stroke="#111" stroke-width="1.4"/><path d="M3 7.5 V15.5 H14 V7.5" fill="#fff" stroke="#111" stroke-width="1.1"/><rect x="7" y="9.5" width="3" height="6" fill="#222"/></svg>
<svg class="i" viewBox="0 0 16 16" style="left:631px;top:88px;width:16px;height:16px"><path d="M0.5 9 L3 4 L14 4 L16.5 9Z" fill="#8a8878" stroke="#111" stroke-width="0.9"/><rect x="10" y="1" width="3" height="4" fill="#fff" stroke="#222" stroke-width="0.7"/><rect x="2.5" y="9" width="12" height="6.5" fill="#fff" stroke="#111" stroke-width="1.1"/></svg>
<svg class="i" viewBox="0 0 16 16" style="left:655px;top:88px;width:16px;height:16px"><path d="M1 9 L8.5 2 L16 9" fill="none" stroke="#111" stroke-width="1.2"/><path d="M3 8 V15.5 H14 V8" fill="#fff" stroke="#111" stroke-width="1.1"/><path d="M4 2 V5" stroke="#111" stroke-width="0.8"/></svg>
<svg class="i" viewBox="0 0 16 16" style="left:679px;top:88px;width:16px;height:16px"><path d="M0.5 9 L3 3.5 L14 3.5 L16.5 9Z" fill="#8a8878" stroke="#111" stroke-width="0.9"/><rect x="2.5" y="9" width="12" height="6.5" fill="#fff" stroke="#111" stroke-width="1.1"/><path d="M4 4h9" stroke="#111" stroke-width="1.2"/></svg>
<div class="a" style="left:700px;top:84px;width:1px;height:25px;background:#c0c0c0"></div>
<div class="a grip" style="left:704px;top:85px;height:22px"></div>
<svg class="i" viewBox="0 0 16 16" style="left:711px;top:88px;width:16px;height:16px"><path d="M1 4 L8 1.5 L11 6 L4 9Z" fill="#6a6a60" stroke="#333" stroke-width="0.8"/><path d="M5 7 L12 4.5 L16 10 L9 15 L4 11Z" fill="#7a7a70" stroke="#333" stroke-width="0.8"/><path d="M7 8 l4-1.5" stroke="#aaa" stroke-width="0.6"/></svg>
<div class="a" style="left:733px;top:86px;width:1px;height:20px;background:#a0a0a0"></div>
<svg class="i" viewBox="0 0 16 16" style="left:741px;top:88px;width:16px;height:16px"><path d="M1 3 L8 1.5 L10 9 L3 11Z" fill="#6a6a60" stroke="#111" stroke-width="0.8"/><path d="M6 7 L13 5 L16 12 L9 15Z" fill="#8a8a80" stroke="#111" stroke-width="0.8"/><path d="M1.5 3.5 L7.5 2 L9 7 L3 9Z" fill="#fff" stroke="#111" stroke-width="0.8"/><path d="M9 8 L15 7 L16 11 L10 14Z" fill="#fff" stroke="#111" stroke-width="0.8"/></svg>
<svg class="i" viewBox="0 0 16 16" style="left:764px;top:88px;width:16px;height:16px"><path d="M1 3 L8 1.5 L10 9 L3 11Z" fill="#6a6a60" stroke="#111" stroke-width="0.8"/><path d="M6 7 L13 5 L16 12 L9 15Z" fill="#8a8a80" stroke="#111" stroke-width="0.8"/></svg>
<svg class="i" viewBox="0 0 16 16" style="left:788px;top:88px;width:16px;height:16px"><path d="M1 3 L8 1.5 L10 9 L3 11Z" fill="#6a6a60" stroke="#111" stroke-width="0.8"/><path d="M6 7 L13 5 L16 12 L9 15Z" fill="#8a8a80" stroke="#111" stroke-width="0.8"/><path d="M1.5 3.5 L7.5 2 L9 7 L3 9Z" fill="#fff" stroke="#111" stroke-width="0.8"/></svg>
<svg class="i" viewBox="0 0 16 16" style="left:812px;top:88px;width:16px;height:16px"><path d="M1 3 L8 1.5 L10 9 L3 11Z" fill="#1a7ae0" stroke="#111" stroke-width="0.8"/><path d="M6 7 L13 5 L16 12 L9 15Z" fill="#8a8a80" stroke="#111" stroke-width="0.8"/></svg>
<svg class="i" viewBox="0 0 16 16" style="left:836px;top:88px;width:16px;height:16px"><path d="M1 3 L8 1.5 L10 9 L3 11Z" fill="#1a7ae0" stroke="#111" stroke-width="0.8"/><path d="M6 7 L13 5 L16 12 L9 15Z" fill="#8a8a80" stroke="#111" stroke-width="0.8"/><path d="M9 8 L12 7.5 L12.5 10 L9.5 10.5Z" fill="#fff"/></svg>
<div class="a" style="left:857px;top:84px;width:1px;height:25px;background:#c0c0c0"></div>
<div class="a grip" style="left:861px;top:85px;height:22px"></div>
<svg class="i" viewBox="0 0 16 16" style="left:867px;top:88px;width:16px;height:16px"><path d="M1.5 14.5 L8 9.5" stroke="#111" stroke-width="3"/><path d="M1.5 14.5 L8 9.5" stroke="#f0c010" stroke-width="1.5" stroke-dasharray="1.5 1.5"/><ellipse cx="11" cy="6" rx="4.5" ry="5" fill="#f0c010" stroke="#222" stroke-width="0.9"/><ellipse cx="11.5" cy="6" rx="2.5" ry="3.5" fill="#e8d040" stroke="#7a6a10" stroke-width="0.6"/><path d="M8 1.5 Q14 0 15.5 4" fill="none" stroke="#888" stroke-width="1"/></svg>
<svg class="i" viewBox="0 0 16 16" style="left:892px;top:88px;width:16px;height:16px"><path d="M1 1 L15 15 M1 15 L15 1" stroke="#111" stroke-width="0.8" stroke-dasharray="1.5 1"/><path d="M4 4 L2 1.5 M12 4 L15 2" stroke="#111" stroke-width="1"/><circle cx="4" cy="12" r="1" fill="#e81818"/><circle cx="12" cy="4" r="1" fill="#e81818"/><path d="M6 10 L10 6" stroke="#e81818" stroke-width="0.8"/></svg>
<svg class="i" viewBox="0 0 16 16" style="left:916px;top:88px;width:16px;height:16px"><path d="M2 15 L2 8 A8 8 0 0 1 15 3 Z" fill="#f0d010" stroke="#6a5a00" stroke-width="0.8"/><path d="M4 13 L4 10 A5 5 0 0 1 12 6Z" fill="#f8f0a0" stroke="#6a5a00" stroke-width="0.5"/></svg>
<div class="a" style="left:929px;top:84px;width:1px;height:25px;background:#c0c0c0"></div>
<div class="a grip" style="left:932px;top:85px;height:22px"></div>
<svg class="i" viewBox="0 0 16 16" style="left:940px;top:88px;width:16px;height:16px"><path d="M1 5 L8 1 L15 4 L16 11 L9 16 L2 12 Z" fill="#c08a80" stroke="#6a3a30" stroke-width="0.8"/><path d="M3 6 L9 8 L14 5 M9 8 L9 14" stroke="#e8c0b8" stroke-width="0.8" fill="none"/></svg>
<div class="a" style="left:585px;top:110px;width:223px;height:27px;border-left:1px solid #e0e0e0;border-right:1px solid #c8c8c8;border-bottom:1px solid #c0c0c0;box-sizing:border-box;background:#f2f2f2"></div>
<div class="a grip" style="left:588px;top:112px;height:21px"></div>
<svg class="i" viewBox="0 0 16 16" style="left:595px;top:115px;width:16px;height:16px"><path d="M8 1 L8 16" stroke="#111" stroke-width="1.2"/><path d="M8 4 Q1 4 1 9 Q2 14 8 13Z" fill="#d01818" stroke="#3a0a0a" stroke-width="0.6"/><path d="M8 4 Q15 4 16 9 Q15 14 8 13Z" fill="#28a850" stroke="#0a3a1a" stroke-width="0.6"/><path d="M3.5 8 l2-1.5v3Z M12.5 8 l-2-1.5v3Z" fill="#fff"/></svg>
<svg class="i" viewBox="0 0 16 16" style="left:619px;top:115px;width:16px;height:16px"><path d="M2 8 L5 5 L6 2.5 L8 3 L9 1.5 L11 2.5 L12.5 2 L14 3.5 L15.5 4 L14.5 9 L12 14 L7 16 L4 12 Z" fill="#fff" stroke="#222" stroke-width="0.8"/><path d="M7 6 L8.5 3.5 M9.5 6 L11 3 M11.5 7 L13.5 4" stroke="#333" stroke-width="0.6"/></svg>
<svg class="i" viewBox="0 0 16 16" style="left:643px;top:115px;width:16px;height:16px"><circle cx="10.5" cy="6" r="4.8" fill="#a8d0f0" stroke="#222" stroke-width="1.1"/><path d="M7 9.5 L1.5 15" stroke="#222" stroke-width="2.4" stroke-linecap="round"/><path d="M9 4 Q10 3 12 3.5" stroke="#fff" stroke-width="0.9" fill="none"/></svg>
<svg class="i" viewBox="0 0 16 16" style="left:667px;top:115px;width:16px;height:16px"><rect x="1" y="1" width="15" height="15" fill="none" stroke="#e81818" stroke-width="0.8" stroke-dasharray="1.2 1.2"/><circle cx="10" cy="6.5" r="4.5" fill="#a8d0f0" stroke="#222" stroke-width="1.1"/><path d="M6.8 9.8 L1.5 15" stroke="#222" stroke-width="2.4" stroke-linecap="round"/></svg>
<svg class="i" viewBox="0 0 16 16" style="left:691px;top:115px;width:16px;height:16px"><path d="M1 1 L5.5 2.5 L2.5 5.5Z M16 1 L11.5 2.5 L14.5 5.5Z M16 16 L11.5 14.5 L14.5 11.5Z" fill="#d01818" stroke="#5a0a0a" stroke-width="0.5"/><path d="M2 2 L6 6 M15 2 L11 6 M15 15 L11 11" stroke="#d01818" stroke-width="1.2"/><circle cx="8.5" cy="8.5" r="3.6" fill="#a8d0f0" stroke="#222" stroke-width="1"/><path d="M6 11 L1.5 15.5" stroke="#222" stroke-width="2" stroke-linecap="round"/></svg>
<svg class="i" viewBox="0 0 16 16" style="left:715px;top:115px;width:16px;height:16px"><circle cx="6" cy="6" r="4.5" fill="#a8d0f0" stroke="#1a5ab0" stroke-width="1.1"/><path d="M9 9 L14 14" stroke="#222" stroke-width="2.2"/><path d="M2 6 Q6 0 12 4 L14 2 L14 8 L8 8 L10 6 Q6 4 4 7Z" fill="#1a8ae8" stroke="#0a3a7a" stroke-width="0.5"/></svg>
<svg class="i" viewBox="0 0 16 16" style="left:740px;top:115px;width:16px;height:16px"><path d="M8 1 L10 4 L10 12 L6 12 L6 4Z" fill="#fff" stroke="#333" stroke-width="0.8"/><path d="M4 14 L8 11 L12 14" fill="none" stroke="#d81818" stroke-width="1"/><circle cx="8" cy="6" r="1" fill="#555"/></svg>
<svg class="i" viewBox="0 0 16 16" style="left:763px;top:115px;width:16px;height:16px"><path d="M0.5 8 Q8 1 16 8 Q8 14 0.5 8Z" fill="#fff" stroke="#111" stroke-width="1"/><circle cx="8" cy="7.5" r="3" fill="#333"/><circle cx="8.5" cy="7" r="1" fill="#fff"/><path d="M1 4 Q8 -1 15 4" fill="none" stroke="#555" stroke-width="0.8"/><path d="M2 11 Q8 16 14 11" fill="none" stroke="#888" stroke-width="0.8"/></svg>
<svg class="i" viewBox="0 0 16 16" style="left:786px;top:115px;width:16px;height:16px"><ellipse cx="4" cy="9" rx="3" ry="4" fill="#111"/><rect x="2" y="13" width="4" height="3" rx="1.5" fill="#111"/><ellipse cx="12" cy="5" rx="3" ry="4" fill="#111"/><rect x="10" y="9" width="4" height="3" rx="1.5" fill="#111"/></svg>
  <div id="vp" class="a">
<svg width="957" height="326" viewBox="0 137 957 326" style="position:absolute;left:0;top:0">
<defs>
<linearGradient id="sky" x1="0" y1="0" x2="0" y2="1"><stop offset="0" stop-color="#c9ced2"/><stop offset="1" stop-color="#eef0f1"/></linearGradient>
<linearGradient id="bot" x1="0" y1="1" x2="1" y2="0"><stop offset="0" stop-color="#6e6e6e"/><stop offset="0.5" stop-color="#8a8a8a"/><stop offset="1" stop-color="#a8a8a8"/></linearGradient>
</defs>
<rect x="0" y="137" width="957" height="326" fill="#cbcbc9"/>
<rect x="0" y="137" width="957" height="83" fill="url(#sky)"/>
<rect x="0" y="137" width="957" height="1" fill="#6a6a6a"/>
<rect x="0" y="137" width="1" height="326" fill="#8a8a8a"/>
<rect x="956" y="137" width="1" height="326" fill="#ececec"/>
<!-- axes -->
<g fill="none" stroke-width="1">
<path d="M368.6 138 L369 151 M369.3 176 L370.5 218" stroke="#1a1a8a"/>
<path d="M0 287 L244 326" stroke="#1f9a1f" stroke-width="1" stroke-dasharray="9 1.2"/>
<path d="M486 313.5 L780 219.5" stroke="#9a0c0c" stroke-width="1" stroke-dasharray="9 1.2"/>
<path d="M452 359.5 L957 440" stroke="#1f9a1f" stroke-dasharray="1.2 4.5" stroke-width="1.1"/>
<path d="M334 360.5 L6 462" stroke="#a01818" stroke-dasharray="1.3 6" stroke-width="1.2"/>
<path d="M376.5 369 L377.5 437" stroke="#6a6ad0" stroke-dasharray="1 4" stroke-width="1"/>
</g>
<!-- hidden dashed outline -->
<g fill="none" stroke="#000" stroke-width="0.95" stroke-dasharray="2.2 3.6">
<path d="M249 345 L197 358 L385 400 L524 338 L486 331"/>
<path d="M242 365 L292 351.5"/>
<path d="M297 371 L336 359"/>
<path d="M332 388 L381 369"/>
<path d="M402 373 L437 379"/>
<path d="M468 345 L500 349"/>
<path d="M453 359 L476 361.5"/>
</g>
<!-- model faces -->
<g stroke="none">
<path d="M245 275.5 L243 302 L244 320.5 L249.5 345 L401.5 373 L400 289 Z" fill="#ffffff"/>
<path d="M245 275.5 L331 266 L473 276 L400 289 Z" fill="#8d8d8d"/>
<path d="M400 289 L473 276 L485.5 316.5 L464 323 Z" fill="#c2c2c2"/>
<path d="M400 289 L464 323 L464 333 L401.5 373 Z" fill="#ffffff"/>
<path d="M464 323 L485.5 316.5 L486 324.5 L464 333 Z" fill="#d8d8d8"/>
<path d="M464 333 L486 324.5 L473 345 L401.5 373 Z" fill="url(#bot)"/>
</g>
<!-- edges -->
<g fill="none" stroke="#0a0a0a" stroke-linejoin="round">
<path d="M245 275.5 L331 266 L473 276 L485.5 316.5 L486 324.5 L473 345 L401.5 373 L249.5 345 L244 320.5 L243 302 Z" stroke-width="1.6"/>
<path d="M245 275.5 L400 289 L473 276" stroke-width="1.2"/>
<path d="M400 289 L401.5 373" stroke-width="1.3"/>
<path d="M400 289 L464 323 L485.5 316.5 M464 323 L464 333 L486 324.5 M464 333 L401.5 373" stroke-width="0.9"/>
<path d="M243 302 L386.5 319.5 L400 320.5 M244 320.5 L386.5 341 L400 342.5" stroke-width="0.9" stroke-dasharray="12 4.5"/>
<path d="M400 289 L386.5 319.5 L386.5 341 L401.5 373" stroke-width="0.7"/>
</g>
<g fill="#0a0a0a">
<circle cx="386.5" cy="319.5" r="1.5"/><circle cx="386.5" cy="341" r="1.5"/><circle cx="400.5" cy="320.5" r="1.4"/><circle cx="400.8" cy="342.5" r="1.2"/>
<circle cx="331" cy="266.5" r="1.3"/><circle cx="401.5" cy="372.5" r="1.5"/><circle cx="485.5" cy="317" r="1.2"/>
</g>
<path d="M371 240 L372 277" stroke="#1a1a8a" stroke-width="1" fill="none"/>
</svg>

  </div>
  <div class="a" style="left:0;top:463px;width:187px;height:28px;background:#f0f0f0;border-right:1px solid #c4c4c4;border-bottom:1px solid #c4c4c4;box-sizing:border-box"></div>
  <div class="a grip" style="left:3px;top:466px;height:22px"></div>
  <div class="a" style="left:11px;top:473px;font-size:7.8px;color:#151530;line-height:10px">Measurements</div>
  <svg class="i" viewBox="0 0 90 16" style="left:0;top:491px;width:90px;height:16px">
    <g stroke="#7a5820" stroke-width="1.7" fill="#efe0c0">
      <circle cx="9" cy="8.7" r="6.3"/><circle cx="30" cy="8.7" r="6.3"/><circle cx="51" cy="8.7" r="6.3"/>
    </g>
    <path d="M7.5 6 a1.7 1.7 0 1 1 3 0 L9.8 12 L8.2 12Z" fill="#e8b0a0"/>
    <circle cx="30" cy="5.3" r="1.1" fill="#111"/><path d="M28.6 7 h2.8 v3.5 h-0.6 v3 h-1.6 v-3 h-0.6Z" fill="#111"/>
    <path d="M54 5.5 A3.6 3.6 0 1 0 54 12" fill="none" stroke="#555" stroke-width="0.9"/>
    <rect x="64" y="5" width="1" height="8" fill="#777"/>
    <circle cx="75" cy="8.7" r="6.3" fill="#d8e8f8" stroke="#2a5a88" stroke-width="1.3"/>
    <text x="75" y="12.3" font-size="10" font-weight="bold" text-anchor="middle" fill="#000" font-family="Liberation Sans">?</text>
  </svg>
  <div class="a" style="left:93px;top:496px;font-size:8.5px;letter-spacing:0.3px;color:#1c2232;line-height:10px;white-space:nowrap">Select objects. Shift to extend select. Drag mouse to select multiple.</div>

  <div id="task" class="a" style="background:linear-gradient(90deg,#3a4c5b 0%,#3e5262 30%,#3f5363 60%,#415565 100%);border-top:1px solid #35454f;box-sizing:border-box"></div>
  <div class="a" style="left:297px;top:511px;width:41px;height:26px;background:#5f6d79;border-left:1px solid #8794a0;border-right:1px solid #7a8894;box-sizing:border-box"></div>
  <div class="a" style="left:384px;top:511px;width:41px;height:26px;background:#7f8b95;border:1px solid #a8b2ba;box-sizing:border-box"></div>
  <svg class="i" viewBox="0 0 957 28" style="left:0;top:510px;width:957px;height:28px">
    <!-- windows logo -->
    <g fill="#fff"><path d="M8 7 L16 6 V13 H8Z"/><path d="M17.2 5.8 L27 4.6 V13 H17.2Z"/><path d="M8 14 H16 V20.5 L8 19.6Z"/><path d="M17.2 14 H27 V22.3 L17.2 21Z"/></g>
    <!-- IE -->
    <path d="M57.5 16.5 H64.5 A7 7 0 1 0 62.5 20.5" fill="none" stroke="#38a8e8" stroke-width="3"/>
    <path d="M51.5 13.5 H63" stroke="#38a8e8" stroke-width="2.2"/>
    <ellipse cx="57" cy="13.5" rx="11.5" ry="4" transform="rotate(-42 57 13.5)" fill="none" stroke="#e8c838" stroke-width="1.3" stroke-dasharray="20 9 60"/>
    <!-- folder -->
    <path d="M89 6 H99 L101 7.5 H110.5 V24 H89Z" fill="#f2d890" stroke="#c8a850" stroke-width="0.6"/>
    <rect x="89" y="9" width="21.5" height="15" fill="#f6e2a0"/>
    <circle cx="93" cy="7" r="0.8" fill="#3a3"/><circle cx="97" cy="7" r="0.8" fill="#c63"/><rect x="103" y="8" width="6" height="2.5" fill="#fff"/><rect x="103" y="8.5" width="2" height="1.6" fill="#2a7ac8"/>
    <path d="M92 25 V17 H108 V25 H105 V20 H95 V25Z" fill="#5aaae0"/><rect x="92" y="15.5" width="16" height="2" fill="#9ad0f0"/>
    <!-- photos -->
    <path d="M134 13 Q132 22 142 24" fill="none" stroke="#d8b868" stroke-width="1.6"/>
    <rect x="136.5" y="8" width="9" height="14" fill="#e8eef2"/><rect x="137.3" y="9" width="7.4" height="12" fill="#e8a048"/>
    <rect x="142.5" y="5.5" width="11.5" height="11" fill="#e8f0f8"/><rect x="143.3" y="6.3" width="10" height="9.4" fill="#9ccaf0"/>
    <rect x="143" y="15" width="10" height="7.5" fill="#e8f0f0"/><rect x="143.8" y="15.8" width="8.4" height="6" fill="#8ac878"/>
    <path d="M145 8 L147 10 L150 9 L149 12 L151.5 14 L148 15 L148.5 18.5 L145.5 16.5 L142.5 19 L142.5 15.5 L139 14.5 L142 12 L140.5 9 L143.5 10Z" fill="#e84a10"/>
    <circle cx="145.2" cy="13.5" r="2" fill="#f08020"/>
    <!-- media player -->
    <rect x="177" y="7" width="18.5" height="16" fill="#5a9ad8" stroke="#a8d0f0" stroke-width="0.6"/><rect x="193.5" y="7.5" width="2" height="15" fill="#c8e0f0"/>
    <circle cx="185" cy="15" r="5.8" fill="#e88030"/><path d="M183 11.5 L189 15 L183 18.5Z" fill="#fff"/>
    <!-- EV -->
    <path d="M221 9 Q217 16 221 23" fill="none" stroke="#3a7ac8" stroke-width="1.3"/>
    <rect x="222" y="8" width="8.5" height="3.5" fill="#e07030" stroke="#fff" stroke-width="0.6"/><rect x="222" y="13" width="8.5" height="3.5" fill="#e07030" stroke="#fff" stroke-width="0.6"/><rect x="222" y="18" width="8.5" height="3" fill="#c85a20" stroke="#fff" stroke-width="0.6"/>
    <path d="M231 14 Q234 20 235 24 Q237 18 241 15" fill="none" stroke="#e8d8a8" stroke-width="1.4"/><path d="M235 8 Q232 14 235 24" fill="none" stroke="#e8d8a8" stroke-width="1"/>
    <!-- webcam -->
    <path d="M266 25 Q266 18 273.5 18 Q281 18 281 25Z" fill="#2a7ad8"/>
    <circle cx="274" cy="11.5" r="7" fill="#e8a040"/><circle cx="274.5" cy="11" r="5" fill="#f0c070"/>
    <ellipse cx="271.5" cy="12" rx="3.2" ry="3.2" fill="#3aa83a"/><circle cx="271.8" cy="12" r="1.5" fill="#e8f0f8"/><circle cx="269" cy="12" r="1.4" fill="#e8f0f8" stroke="#3aa83a" stroke-width="0.8"/>
    <!-- chrome -->
    <circle cx="317" cy="15" r="9" fill="#f0c020"/>
    <path d="M317 15 L309.2 10.5 A9 9 0 0 1 324.8 10.5Z" fill="#d83828"/>
    <path d="M317 15 L309.2 10.5 A9 9 0 0 0 312.5 22.8Z" fill="#3aa040"/>
    <path d="M317 15 L312.5 22.8 A9 9 0 0 0 315 23.8Z" fill="#3aa040"/>
    <circle cx="317" cy="15" r="4" fill="#fff"/><circle cx="317" cy="15" r="3.1" fill="#3a7ad8"/>
    <!-- amazon -->
    <rect x="350" y="2.8" width="22" height="21.6" rx="2" fill="#fff"/>
    <text x="361" y="17" font-size="16" font-weight="bold" text-anchor="middle" fill="#000" font-family="Liberation Sans">a</text>
    <path d="M353 19.5 Q361 24 369 19.5" fill="none" stroke="#e8a020" stroke-width="1.3"/><path d="M367 18.5 L369.5 19.3 L368.5 21.5" fill="none" stroke="#e8a020" stroke-width="1"/>
    <!-- sketchup -->
    <path d="M395.5 8 L406 3.5 L413.5 7.5 L412.5 18.5 L402 24.5 L397.5 20.5Z" fill="#e01e1e"/>
    <path d="M406 3.5 L413.5 7.5 L412.5 18.5 L406.5 21.5Z" fill="#c81414"/>
    <path d="M397 9.5 L406.5 5.5 L411 8 M398 13.5 L404.5 11 M399 17.5 L402.5 16" fill="none" stroke="#fff" stroke-width="1.8"/>
    <!-- tray -->
    <path d="M807 5 L808.5 7.5 L810 5 M810.5 5 L812 7.5 L813.5 5" fill="none" stroke="#eef2f5" stroke-width="0.9"/>
    <path d="M821 15.5 L823.5 12.5 L826 15.5Z" fill="#e8edf2"/>
    <path d="M836.8 19 V8.5" stroke="#e8edf2" stroke-width="1.3"/><path d="M837.5 8.8 H842 V10 H845.5 V13.5 H837.5Z" fill="#e8edf2"/>
    <rect x="853" y="9" width="2.2" height="10" fill="#e8edf2"/><rect x="857" y="8.5" width="5" height="11" fill="none" stroke="#e8edf2" stroke-width="1.3"/><rect x="852" y="12" width="4" height="2" fill="#e8edf2"/>
    <g fill="#e8edf2"><rect x="869" y="17" width="1.3" height="1.5"/><rect x="871.5" y="15.5" width="1.3" height="3"/><rect x="874" y="13.5" width="1.3" height="5"/><rect x="876.5" y="11" width="1.3" height="7.5"/><rect x="879" y="9" width="1.3" height="9.5"/></g>
    <path d="M885 11.5 H887.5 L890.5 8.5 V19.5 L887.5 16.5 H885Z" fill="#e8edf2"/><path d="M892.5 11 Q894 14 892.5 17 M894.5 9.5 Q897 14 894.5 18.5" fill="none" stroke="#e8edf2" stroke-width="0.8"/>
  </svg>
  <div class="tk" style="left:771px;top:520px;font-size:8.2px">Desktop</div>
  <div class="tk" style="left:910px;top:514px;font-size:8.5px;transform:scaleX(0.92);transform-origin:0 0">10:17 PM</div>
  <div class="tk" style="left:909px;top:526px;font-size:8.5px;transform:scaleX(0.92);transform-origin:0 0">10/4/2014</div>

</div>
</body></html>
